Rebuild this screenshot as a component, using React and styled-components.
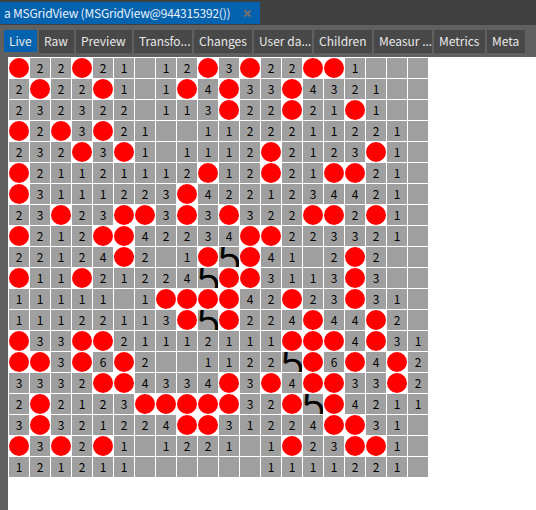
import React from "react";
import styled, { createGlobalStyle } from "styled-components";

const GlobalStyle = createGlobalStyle`
  * { box-sizing: border-box; }
  body { margin: 0; background: #606060; overflow: hidden; }
`;

const Inspector = styled.div`
  width: 536px;
  height: 510px;
  display: flex;
  flex-direction: column;
  background: #606060;
  overflow: hidden;
  font-family: "Noto Sans CJK SC", "Noto Sans", sans-serif;
  font-size: 12px;
`;

const TitleBar = styled.header`
  flex: none;
  height: 25px;
  padding-top: 2px;
  background: #404040;
`;

const PageTab = styled.div`
  width: 260px;
  height: 22px;
  padding: 0 8px 0 4px;
  display: flex;
  align-items: center;
  justify-content: space-between;
  background: #0562af;
  color: #e8f0f8;
  line-height: 22px;
  white-space: nowrap;
`;

const PageTitle = styled.span`
  letter-spacing: -0.2px;
`;

const CloseIcon = styled.svg`
  width: 9px;
  height: 9px;
  display: block;
`;

const TabStrip = styled.nav`
  flex: none;
  height: 32px;
  padding: 5px 0 0 4px;
  display: flex;
  gap: 2px;
`;

const Tab = styled.div`
  flex: none;
  width: ${(p) => p.$width}px;
  height: ${(p) => (p.$active ? 22 : 23)}px;
  padding-left: 5px;
  background: ${(p) => (p.$active ? "#0562af" : "#484848")};
  border-bottom: ${(p) => (p.$active ? "none" : "1px solid #444444")};
  color: #e8e8e8;
  line-height: 22px;
  white-space: nowrap;
`;

const Canvas = styled.main`
  flex: 1;
  margin-left: 8px;
  padding: 1px;
  background: #ffffff;
`;

const Grid = styled.div`
  display: grid;
  grid-template-columns: repeat(20, 20px);
  grid-auto-rows: 20px;
  gap: 1px;
`;

const Cell = styled.div`
  overflow: hidden;
  background: #9f9f9f;
  color: #000000;
  line-height: 20px;
  text-align: center;
`;

const Mine = styled.div`
  border-radius: 50%;
  background: #ff0000;
`;

const OversizedDigit = styled.span`
  display: block;
  width: 20px;
  height: 20px;
  margin-top: -2px;
  font-size: 46px;
  font-weight: 300;
  -webkit-text-stroke: 0.7px #000000;
  line-height: 20px;
  text-align: left;
  text-indent: -2px;
`;

const TABS = [
  { label: "Live", width: 33, active: true },
  { label: "Raw", width: 35 },
  { label: "Preview", width: 56 },
  { label: "Transfo...", width: 58 },
  { label: "Changes", width: 58 },
  { label: "User da...", width: 58 },
  { label: "Children", width: 58 },
  { label: "Measur ...", width: 58 },
  { label: "Metrics", width: 51 },
  { label: "Meta", width: 38 },
];

const ROWS = [
  "*22*21.12*3*22**1...",
  "2*22*1.1*4*33*4321..",
  "232322.113*22*21*1..",
  "*2*3*21..1122211221.",
  "232*3*1.1112*2123*1.",
  "*21121112*12*21**21.",
  "*3111223*4221234421.",
  "23*23**3*3*322**2*1.",
  "*212**42234**223321.",
  "22124*2.1*5*41.2*2..",
  "*11*212245**3113*3..",
  "11111.1****42*23*31.",
  "11122113*5*224*44*2.",
  "*33**21112111***4*31",
  "**3*6*2..11225*6*4*2",
  "3332**4334*3*4**33*2",
  "2*2123*****32*5*4211",
  "3*321224**31224**31.",
  "*3*2*1.1221.1*23**1.",
  "121211......1111221.",
];

function GridCell({ value }) {
  if (value === "*") return <Mine />;
  if (value === "5") {
    return (
      <Cell>
        <OversizedDigit>5</OversizedDigit>
      </Cell>
    );
  }
  return <Cell>{value === "." ? "" : value}</Cell>;
}

export default function App() {
  return (
    <>
      <GlobalStyle />
      <Inspector>
        <TitleBar>
          <PageTab>
            <PageTitle>a MSGridView (MSGridView@944315392())</PageTitle>
            <CloseIcon viewBox="0 0 9 9">
              <path d="M1.5 1.5 7.5 7.5M7.5 1.5 1.5 7.5" stroke="#77736f" strokeWidth="1.8" />
            </CloseIcon>
          </PageTab>
        </TitleBar>
        <TabStrip>
          {TABS.map((t) => (
            <Tab key={t.label} $width={t.width} $active={t.active}>
              {t.label}
            </Tab>
          ))}
        </TabStrip>
        <Canvas>
          <Grid>
            {ROWS.flatMap((row, y) =>
              [...row].map((value, x) => <GridCell key={`${x}-${y}`} value={value} />)
            )}
          </Grid>
        </Canvas>
      </Inspector>
    </>
  );
}
